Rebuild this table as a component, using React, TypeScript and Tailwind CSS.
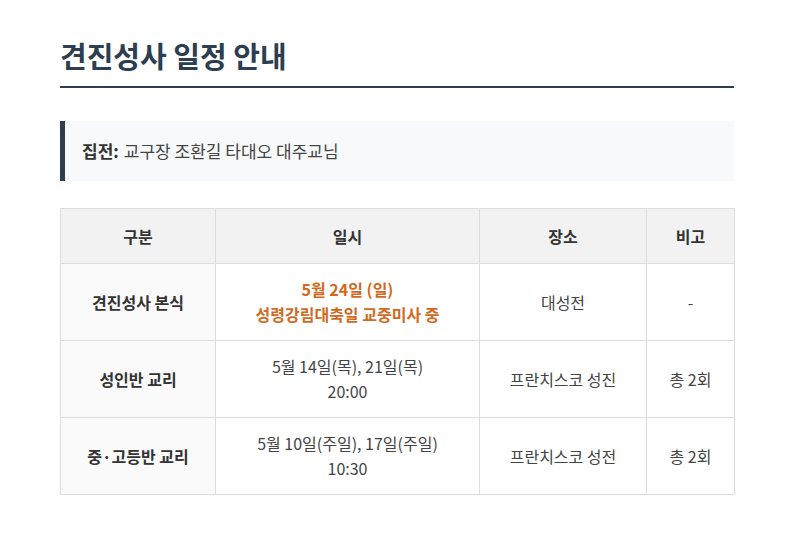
import * as React from "react";

const font = '"Noto Sans CJK KR", "Noto Sans", sans-serif';

const rows = [
  {
    name: "견진성사 본식",
    date: ["5월 24일 (일)", "성령강림대축일 교중미사 중"],
    highlight: true,
    place: "대성전",
    note: "-",
  },
  {
    name: "성인반 교리",
    date: ["5월 14일(목), 21일(목)", "20:00"],
    place: "프란치스코 성진",
    note: "총 2회",
  },
  {
    name: "중·고등반 교리",
    date: ["5월 10일(주일), 17일(주일)", "10:30"],
    place: "프란치스코 성전",
    note: "총 2회",
  },
];

export default function App() {
  return (
    <div className="min-h-[545px] bg-white" style={{ fontFamily: font }}>
      <div className="ml-[60px] w-[674px] pt-[35px]">
        {/* Title */}
        <h1 className="text-[29px] leading-[40px] font-bold text-[#2c3e50] pb-[11px] border-b-2 border-[#2c3e50]">
          견진성사 일정 안내
        </h1>

        {/* Celebrant */}
        <div className="mt-[33px] h-[60px] flex items-center bg-[#f8f9fa] border-l-[5px] border-[#2c3e50] pl-[17px] text-[17px] text-[#444]">
          <span className="font-bold text-[#333]">집전:</span>
          <span className="ml-[5px]">교구장 조환길 타대오 대주교님</span>
        </div>

        {/* Schedule table */}
        <table className="mt-[27px] w-full border-collapse table-fixed text-[16px] text-center">
          <colgroup>
            <col className="w-[155px]" />
            <col className="w-[264px]" />
            <col className="w-[167px]" />
            <col className="w-[88px]" />
          </colgroup>
          <thead>
            <tr className="h-[55px] bg-[#f2f2f2]">
              {["구분", "일시", "장소", "비고"].map((h) => (
                <th
                  key={h}
                  className="border border-[#dddddd] font-bold text-[#333]"
                >
                  {h}
                </th>
              ))}
            </tr>
          </thead>
          <tbody>
            {rows.map((r) => (
              <tr key={r.name} className="h-[77px]">
                <td className="border border-[#dddddd] bg-[#fafafa] font-bold text-[#333]">
                  {r.name}
                </td>
                <td
                  className={
                    r.highlight
                      ? "border border-[#dddddd] leading-[25px] font-bold text-[#d2691e]"
                      : "border border-[#dddddd] leading-[25px] text-[#444]"
                  }
                >
                  {r.date.map((d) => (
                    <div key={d}>{d}</div>
                  ))}
                </td>
                <td className="border border-[#dddddd] text-[#444]">
                  {r.place}
                </td>
                <td className="border border-[#dddddd] text-[#444]">
                  {r.note}
                </td>
              </tr>
            ))}
          </tbody>
        </table>
      </div>
    </div>
  );
}
